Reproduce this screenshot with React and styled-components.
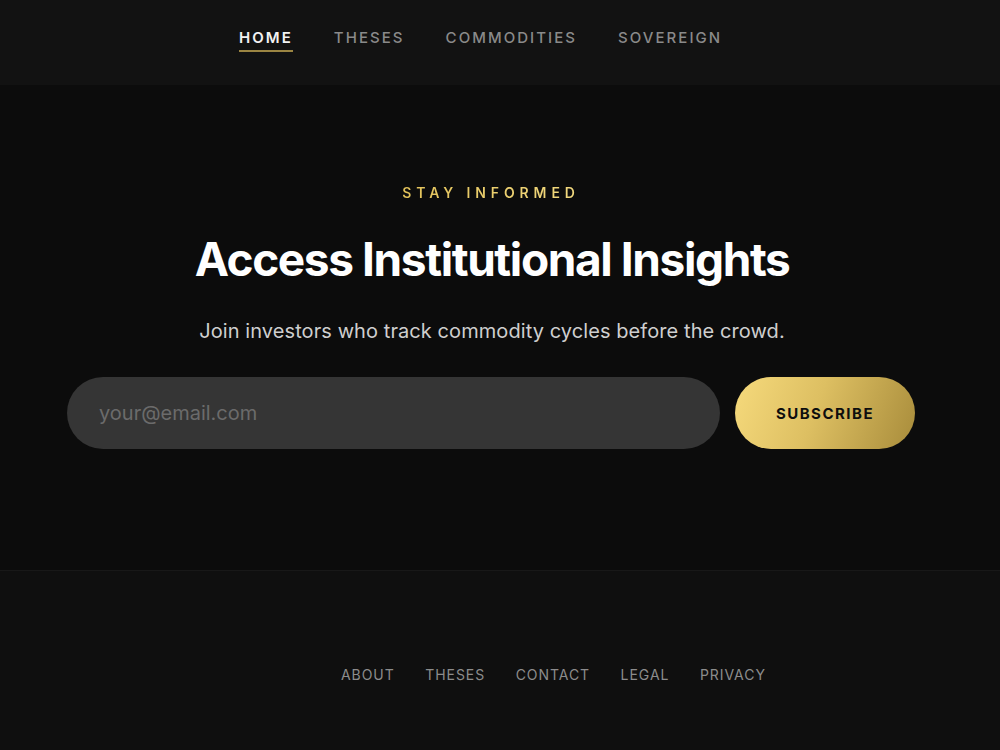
import React from 'react';
import styled, { createGlobalStyle } from 'styled-components';

const GlobalStyle = createGlobalStyle`
  * { box-sizing: border-box; }
  body {
    margin: 0;
    background: #0f0f0f;
    font-family: Inter, "Noto Sans", sans-serif;
    -webkit-font-smoothing: antialiased;
  }
`;

const Page = styled.div`
  width: 100%;
  min-height: 100vh;
  display: flex;
  flex-direction: column;
`;

const Header = styled.header`
  height: 85px;
  background: #121212;
  display: flex;
  align-items: center;
  padding-left: 239px;
`;

const Nav = styled.nav`
  display: flex;
  gap: 41px;
  margin-top: -4px;
`;

const NavLink = styled.a`
  font-size: 15px;
  font-weight: ${(p) => (p.active ? 600 : 500)};
  letter-spacing: 2.05px;
  color: ${(p) => (p.active ? '#f2f2f2' : '#8a8a8a')};
  text-decoration: none;
  line-height: 18px;
  padding-bottom: 3px;
  border-bottom: 2px solid ${(p) => (p.active ? '#9b8542' : 'transparent')};
`;

const Hero = styled.section`
  background: #0c0c0c;
  padding: 99px 0 121px;
  display: flex;
  flex-direction: column;
  align-items: center;
  border-bottom: 1px solid #181818;
`;

const Eyebrow = styled.div`
  font-size: 14px;
  font-weight: 600;
  letter-spacing: 4.9px;
  line-height: 17px;
  background: linear-gradient(90deg, #e2c25a, #f3da80);
  -webkit-background-clip: text;
  background-clip: text;
  color: transparent;
  margin-left: -18px;
`;

const Title = styled.h1`
  margin: 31px 0 0;
  font-size: 46px;
  font-weight: 700;
  letter-spacing: -1.4px;
  line-height: 55px;
  color: #ffffff;
  margin-left: -16px;
`;

const Lead = styled.p`
  margin: 29px 0 0;
  font-size: 20px;
  line-height: 30px;
  letter-spacing: 0.08px;
  color: #cfcfcf;
  margin-left: -16px;
`;

const Form = styled.form`
  margin-top: 31px;
  display: flex;
  gap: 15px;
  width: 848px;
  margin-left: -18px;
`;

const EmailInput = styled.input`
  flex: 1;
  height: 72px;
  border: none;
  border-radius: 36px;
  background: #353535;
  padding: 0 32px;
  font-family: inherit;
  font-size: 20px;
  color: #eee;
  outline: none;
  &::placeholder {
    color: #6b6b6b;
  }
`;

const SubscribeButton = styled.button`
  width: 180px;
  height: 72px;
  border: none;
  border-radius: 36px;
  background: linear-gradient(110deg, #f6da7c 0%, #ddbf62 45%, #a88c3b 100%);
  font-family: inherit;
  font-size: 15px;
  font-weight: 700;
  letter-spacing: 1.5px;
  color: #0e0e0e;
  cursor: pointer;
`;

const Footer = styled.footer`
  flex: 1;
  background: #0f0f0f;
  padding: 95px 0 0 341px;
`;

const FooterLinks = styled.div`
  display: flex;
  gap: 30.5px;
`;

const FooterLink = styled.a`
  font-size: 14px;
  font-weight: 400;
  letter-spacing: 0.95px;
  line-height: 17px;
  color: #8c8c8c;
  text-decoration: none;
`;

const navItems = ['HOME', 'THESES', 'COMMODITIES', 'SOVEREIGN'];
const footerItems = ['ABOUT', 'THESES', 'CONTACT', 'LEGAL', 'PRIVACY'];

const App = () => {
  return (
    <Page>
      <GlobalStyle />
      <Header>
        <Nav>
          {navItems.map((item) => (
            <NavLink key={item} href="#" active={item === 'HOME' ? 1 : 0}>
              {item}
            </NavLink>
          ))}
        </Nav>
      </Header>
      <Hero>
        <Eyebrow>STAY INFORMED</Eyebrow>
        <Title>Access Institutional Insights</Title>
        <Lead>Join investors who track commodity cycles before the crowd.</Lead>
        <Form onSubmit={(e) => e.preventDefault()}>
          <EmailInput type="email" placeholder="your@email.com" />
          <SubscribeButton type="submit">SUBSCRIBE</SubscribeButton>
        </Form>
      </Hero>
      <Footer>
        <FooterLinks>
          {footerItems.map((item) => (
            <FooterLink key={item} href="#">
              {item}
            </FooterLink>
          ))}
        </FooterLinks>
      </Footer>
    </Page>
  );
};

export default App;
